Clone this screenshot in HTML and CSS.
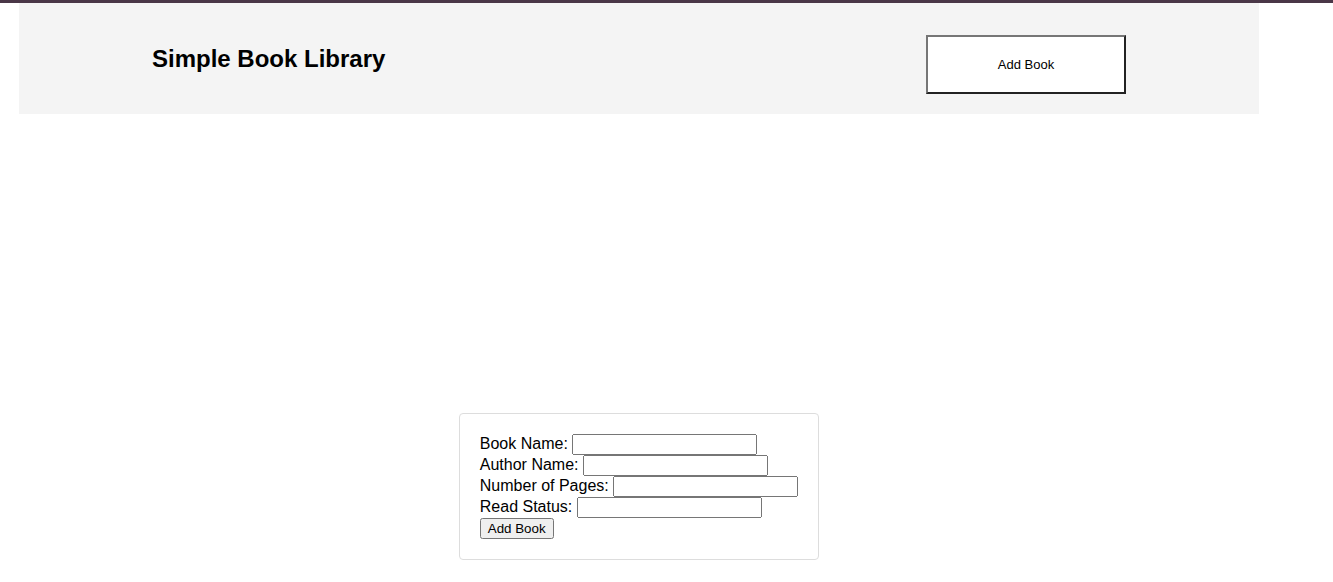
FILE: index.html
```html
<!DOCTYPE html>
<html>
<head>
<meta charset="utf-8">
<title>Simple Book Library</title>
<link rel="stylesheet" href="styles.css">
</head>
<body>
<div class="page">
  <header class="header">
    <h1 class="title">Simple Book Library</h1>
    <button class="open-btn">Add Book</button>
  </header>
  <main class="library"></main>
  <form class="book-form">
    <label>Book Name: <input type="text"></label><br>
    <label>Author Name: <input type="text"></label><br>
    <label>Number of Pages: <input type="text"></label><br>
    <label>Read Status: <input type="text"></label><br>
    <button type="button">Add Book</button>
  </form>
</div>
</body>
</html>
```

FILE: styles.css
```css
html, body {
  margin: 0;
  padding: 0;
}
body {
  border-top: 3px solid #4a3747;
  font-family: "Liberation Sans", Arial, sans-serif;
  color: #000;
  background: #fff;
}
.page {
  margin: 0 74px 0 19px;
}
.header {
  height: 111px;
  background: #f4f4f4;
  display: flex;
  align-items: center;
  justify-content: space-between;
  padding: 1px 133px 0;
  box-sizing: border-box;
}
.title {
  margin: 0;
  font-size: 24px;
  font-weight: bold;
}
.open-btn {
  margin-top: 10px;
  width: 200px;
  height: 59px;
  background: #fff;
  border: 2px solid;
  border-color: #767676 #222 #222 #767676;
  font-family: "Liberation Sans", Arial, sans-serif;
  font-size: 13px;
  color: #000;
  padding: 0;
}
.library {
  display: block;
  height: 299px;
}
.book-form {
  width: fit-content;
  margin: 0 auto;
  border: 1px solid #ddd;
  border-radius: 4px;
  padding: 20px;
  font-size: 16px;
}
```
